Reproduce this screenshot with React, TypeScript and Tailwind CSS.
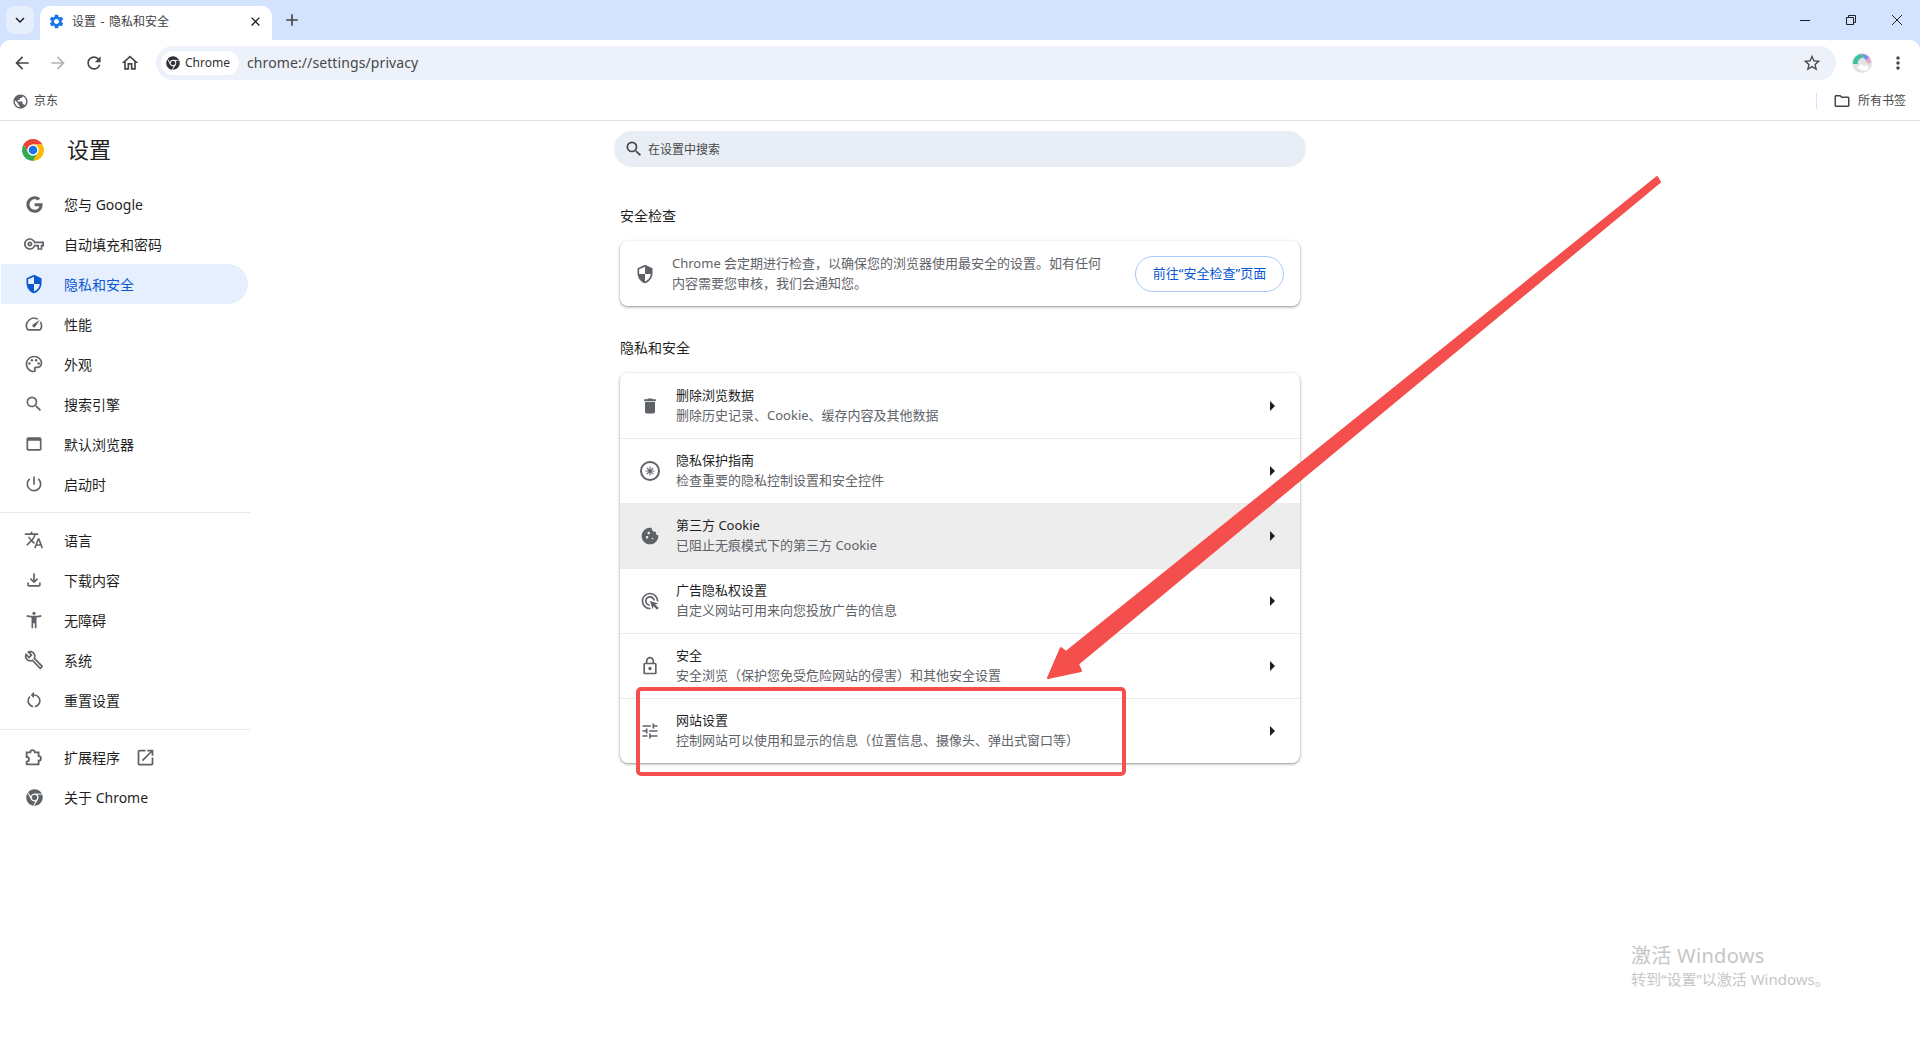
import type { ReactNode } from "react";
import { FaChrome, FaGoogle } from "react-icons/fa";
import {
  MdAccessibilityNew,
  MdAdd,
  MdAdsClick,
  MdArrowBack,
  MdArrowForward,
  MdArrowRight,
  MdClose,
  MdCookie,
  MdDelete,
  MdKeyboardArrowDown,
  MdMoreVert,
  MdOpenInNew,
  MdOutlineBuild,
  MdOutlineFileDownload,
  MdOutlineFolder,
  MdOutlineHome,
  MdOutlineLock,
  MdOutlinePalette,
  MdOutlinePowerSettingsNew,
  MdOutlineSpeed,
  MdOutlineStarBorder,
  MdOutlineVpnKey,
  MdOutlineWebAsset,
  MdPublic,
  MdRefresh,
  MdRestartAlt,
  MdSearch,
  MdSecurity,
  MdSettings,
  MdTranslate,
  MdTune,
} from "react-icons/md";

const ChromeLogo = () => (
  <svg viewBox="0 0 48 48" className="w-[24px] h-[24px]">
    <path d="M4.95 13A22 22 0 0 1 43.05 13L24 13A11 11 0 0 0 14.47 29.5Z" fill="#ea4335" />
    <path d="M4.95 13A22 22 0 0 1 43.05 13L24 13A11 11 0 0 0 14.47 29.5Z" fill="#fbbc04" transform="rotate(120 24 24)" />
    <path d="M4.95 13A22 22 0 0 1 43.05 13L24 13A11 11 0 0 0 14.47 29.5Z" fill="#34a853" transform="rotate(240 24 24)" />
    <circle cx="24" cy="24" r="11" fill="#fff" />
    <circle cx="24" cy="24" r="8.6" fill="#1a73e8" />
  </svg>
);

const PrivacyGuideIcon = () => (
  <svg viewBox="0 0 24 24" className="w-[24px] h-[24px]" fill="none" stroke="#5f6368">
    <circle cx="12" cy="12" r="9" strokeWidth="2" />
    <path d="M12 7.5v9M7.5 12h9M8.8 8.8l6.4 6.4M15.2 8.8l-6.4 6.4" strokeWidth="1.1" />
  </svg>
);

const ExtensionIcon = () => (
  <svg viewBox="0 0 24 24" className="w-[22px] h-[22px]" fill="none" stroke="#5f6368" strokeWidth="2">
    <path d="M4 7h4a2.5 2.5 0 0 1 5 0h4v4a2.5 2.5 0 0 1 0 5v4H4v-3a2.5 2.5 0 0 0 0-5Z" />
  </svg>
);

const Avatar = () => (
  <svg viewBox="0 0 20 20" className="w-[20px] h-[20px]">
    <circle cx="10" cy="10" r="10" fill="#e3e3e3" />
    <path d="M1 11a9 9 0 0 1 9-10l2 4a5 5 0 0 0-6 6Z" fill="#3fc1a0" />
    <path d="M10 1a9 9 0 0 1 7 3l-3 4a5 5 0 0 0-2-3Z" fill="#7c8ce8" />
    <path d="M17 4a9 9 0 0 1 2 6l-4 0a5 5 0 0 0-1-2Z" fill="#e7a6d0" />
    <path d="M5 15l4-4 3 2 3-1 2 4-5 2Z" fill="#fff" />
  </svg>
);

type NavItem = { icon: ReactNode; label: string; active?: boolean; external?: boolean };

const icon = "text-[#5f6368]";

const navTop: NavItem[] = [
  { icon: <FaGoogle size={17} className={icon} />, label: "您与 Google" },
  { icon: <MdOutlineVpnKey size={20} className={icon} />, label: "自动填充和密码" },
  { icon: <MdSecurity size={20} className="text-[#0b57d0]" />, label: "隐私和安全", active: true },
  { icon: <MdOutlineSpeed size={20} className={icon} />, label: "性能" },
  { icon: <MdOutlinePalette size={20} className={icon} />, label: "外观" },
  { icon: <MdSearch size={20} className={icon} />, label: "搜索引擎" },
  { icon: <MdOutlineWebAsset size={20} className={icon} />, label: "默认浏览器" },
  { icon: <MdOutlinePowerSettingsNew size={20} className={icon} />, label: "启动时" },
];

const navMiddle: NavItem[] = [
  { icon: <MdTranslate size={20} className={icon} />, label: "语言" },
  { icon: <MdOutlineFileDownload size={20} className={icon} />, label: "下载内容" },
  { icon: <MdAccessibilityNew size={20} className={icon} />, label: "无障碍" },
  { icon: <MdOutlineBuild size={20} className={icon} />, label: "系统" },
  { icon: <MdRestartAlt size={20} className={icon} />, label: "重置设置" },
];

const navBottom: NavItem[] = [
  { icon: <ExtensionIcon />, label: "扩展程序", external: true },
  { icon: <FaChrome size={17} className={icon} />, label: "关于 Chrome" },
];

const rows = [
  { icon: <MdDelete size={20} className={icon} />, title: "删除浏览数据", sub: "删除历史记录、Cookie、缓存内容及其他数据" },
  { icon: <PrivacyGuideIcon />, title: "隐私保护指南", sub: "检查重要的隐私控制设置和安全控件" },
  { icon: <MdCookie size={20} className={icon} />, title: "第三方 Cookie", sub: "已阻止无痕模式下的第三方 Cookie", hover: true },
  { icon: <MdAdsClick size={20} className={icon} />, title: "广告隐私权设置", sub: "自定义网站可用来向您投放广告的信息" },
  { icon: <MdOutlineLock size={20} className={icon} />, title: "安全", sub: "安全浏览（保护您免受危险网站的侵害）和其他安全设置" },
  { icon: <MdTune size={20} className={icon} />, title: "网站设置", sub: "控制网站可以使用和显示的信息（位置信息、摄像头、弹出式窗口等）" },
];

const NavRow = ({ item }: { item: NavItem }) => (
  <div
    className={`flex items-center h-[40px] w-[247px] ml-[1px] rounded-r-full text-[14px] ${
      item.active ? "bg-[#e6effd] text-[#0b57d0]" : "text-[#1f1f1f]"
    }`}
  >
    <span className="w-[63px] flex justify-center pl-[3px]">{item.icon}</span>
    <span>{item.label}</span>
    {item.external && <MdOpenInNew size={21} className="ml-[15px] text-[#5f6368]" />}
  </div>
);

const App = () => {
  return (
    <div className="relative w-[1920px] h-[1040px] overflow-hidden bg-white font-['Noto_Sans','Noto_Sans_CJK_SC',sans-serif]">
      {/* Tab strip */}
      <div className="flex items-end h-[40px] bg-[#d3e3fd]">
        <div className="self-start mt-[6px] ml-[6px] w-[28px] h-[28px] rounded-lg bg-[#e6eefc] flex items-center justify-center">
          <MdKeyboardArrowDown size={18} className="text-[#1f1f1f]" />
        </div>
        <div className="ml-[6px] flex items-center w-[232px] h-[34px] bg-white rounded-t-[10px] pl-[8px] pr-[9px] pb-[3px]">
          <MdSettings size={17} className="text-[#1a73e8]" />
          <span className="ml-[7px] flex-1 text-[12px] text-[#3c4043] [word-spacing:1.5px]">设置 - 隐私和安全</span>
          <MdClose size={15} className="text-[#1f1f1f]" />
        </div>
        <div className="self-start mt-[10px] ml-[10px]">
          <MdAdd size={20} className="text-[#444746]" />
        </div>
        <div className="flex-1" />
        <div className="self-start flex items-center h-[40px] pr-[16px] gap-[32px]">
          <svg width="14" height="14" viewBox="0 0 14 14" stroke="#1f1f1f" fill="none"><path d="M2 7.5h10" /></svg>
          <svg width="14" height="14" viewBox="0 0 14 14" stroke="#1f1f1f" fill="none"><path d="M2.5 4.5h7v7h-7zM4.5 4.5v-2h7v7h-2" /></svg>
          <svg width="14" height="14" viewBox="0 0 14 14" stroke="#1f1f1f" fill="none"><path d="M2 2l10 10M12 2L2 12" /></svg>
        </div>
      </div>

      {/* Toolbar */}
      <div className="bg-[#d3e3fd]">
        <div className="flex items-center h-[40px] bg-white rounded-t-[10px] pt-[6px]">
          <div className="flex items-center w-[156px] pl-[12px] gap-[16px]">
            <MdArrowBack size={20} className="text-[#474747]" />
            <MdArrowForward size={20} className="text-[#b4b4b4]" />
            <MdRefresh size={20} className="text-[#474747]" />
            <MdOutlineHome size={20} className="text-[#474747]" />
          </div>
          <div className="flex items-center w-[1680px] h-[34px] rounded-full bg-[#edf2fa] pl-[5px] pr-[14px]">
            <div className="flex items-center h-[24px] w-[78px] rounded-full bg-white pl-[5px] gap-[5px]">
              <FaChrome size={14} className="text-[#303134]" />
              <span className="text-[12px] text-[#303134]">Chrome</span>
            </div>
            <span className="ml-[8px] pb-[2px] flex-1 text-[14px] text-[#474747] tracking-[0.1px]">chrome://settings/privacy</span>
            <MdOutlineStarBorder size={20} className="text-[#474747]" />
          </div>
          <div className="flex items-center pl-[16px] gap-[16px]">
            <Avatar />
            <MdMoreVert size={20} className="text-[#474747]" />
          </div>
        </div>
      </div>

      {/* Bookmarks bar */}
      <div className="flex items-center h-[41px] border-b border-[#e0e0e0] pt-[2px] pl-[12px] pr-[14px] text-[12px] text-[#474747]">
        <MdPublic size={17} className="text-[#5f6368]" />
        <span className="ml-[5px] flex-1">京东</span>
        <div className="w-[1px] h-[16px] bg-[#d3e3fd] mr-[16px]" />
        <MdOutlineFolder size={18} className="text-[#474747]" />
        <span className="ml-[7px]">所有书签</span>
      </div>

      {/* Settings page */}
      <div className="grid grid-cols-[250px_1fr_250px]">
        <aside>
          <div className="flex items-center h-[63px] pl-[21px] pb-[6px] gap-[22px]">
            <ChromeLogo />
            <span className="text-[22px] text-[#1f1f1f]">设置</span>
          </div>
          {navTop.map((item) => <NavRow key={item.label} item={item} />)}
          <div className="mt-[8px] mb-[7px] h-[1px] bg-[#e9e9e9]" />
          {navMiddle.map((item) => <NavRow key={item.label} item={item} />)}
          <div className="mt-[9px] mb-[7px] h-[1px] bg-[#e9e9e9]" />
          {navBottom.map((item) => <NavRow key={item.label} item={item} />)}
        </aside>

        <main className="flex flex-col items-center pt-[10px]">
          <div className="flex items-center w-[692px] h-[36px] rounded-full bg-[#e9eef6] pl-[10px] text-[12px] text-[#474747]">
            <MdSearch size={20} className="text-[#474747]" />
            <span className="ml-[4px] pt-[2px]">在设置中搜索</span>
          </div>

          <div className="w-[680px]">
            <h2 className="mt-[39px] h-[20px] leading-[20px] text-[14px] font-normal text-[#1f1f1f]">安全检查</h2>
            <div className="mt-[15px] flex items-center h-[65px] rounded-lg bg-white shadow-[0_1px_3px_1px_rgba(60,64,67,0.15),0_1px_2px_rgba(60,64,67,0.4)] pl-[15px] pr-[16px]">
              <MdSecurity size={20} className="text-[#5f6368]" />
              <p className="ml-[17px] mb-[2px] w-[432px] text-[13px] leading-[20px] text-[#5f6368]">
                Chrome 会定期进行检查，以确保您的浏览器使用最安全的设置。如有任何内容需要您审核，我们会通知您。
              </p>
              <div className="flex-1" />
              <button className="w-[149px] h-[36px] rounded-full border border-[#a8c7fa] text-[13px] text-[#0b57d0]">
                前往“安全检查”页面
              </button>
            </div>

            <h2 className="mt-[32px] h-[20px] leading-[20px] text-[14px] font-normal text-[#1f1f1f]">隐私和安全</h2>
            <div className="mt-[15px] rounded-lg bg-white overflow-hidden shadow-[0_1px_3px_1px_rgba(60,64,67,0.15),0_1px_2px_rgba(60,64,67,0.4)]">
              {rows.map((row, i) => (
                <div
                  key={row.title}
                  className={`flex items-center h-[65px] pl-[18px] pr-[16px] ${i > 0 ? "border-t border-[#ececec]" : ""} ${
                    row.hover ? "bg-[#ededed] border-[#dcdcdc]" : ""
                  }`}
                >
                  <span className="w-[24px] flex justify-center">{row.icon}</span>
                  <div className="ml-[14px] pb-[2px] flex-1 text-[13px] leading-[20px]">
                    <div className="text-[#1f1f1f]">{row.title}</div>
                    <div className="text-[#5f6368]">{row.sub}</div>
                  </div>
                  <MdArrowRight size={24} className="text-[#1f1f1f]" />
                </div>
              ))}
            </div>
          </div>
        </main>
        <div />
      </div>

      {/* Annotations */}
      <div className="absolute left-[636px] top-[687px] w-[490px] h-[89px] rounded-[5px] border-[4px] border-[#f44f4c]" />
      <svg className="absolute left-0 top-0 pointer-events-none" width="1920" height="1040">
        <path
          d="M1660 182L1657 177L1066 652L1061 648L1048 678L1081 671L1078 664Z"
          fill="#f44f4c"
          stroke="#f44f4c"
          strokeWidth="2"
          strokeLinejoin="round"
        />
      </svg>

      {/* Activation watermark */}
      <div className="absolute left-[1631px] top-[942px] text-[#c6c6c6]">
        <div className="text-[20px] leading-[28px] tracking-[0.3px]">激活 Windows</div>
        <div className="text-[15px] leading-[19px]">转到“设置”以激活 Windows。</div>
      </div>
    </div>
  );
};

export default App;
